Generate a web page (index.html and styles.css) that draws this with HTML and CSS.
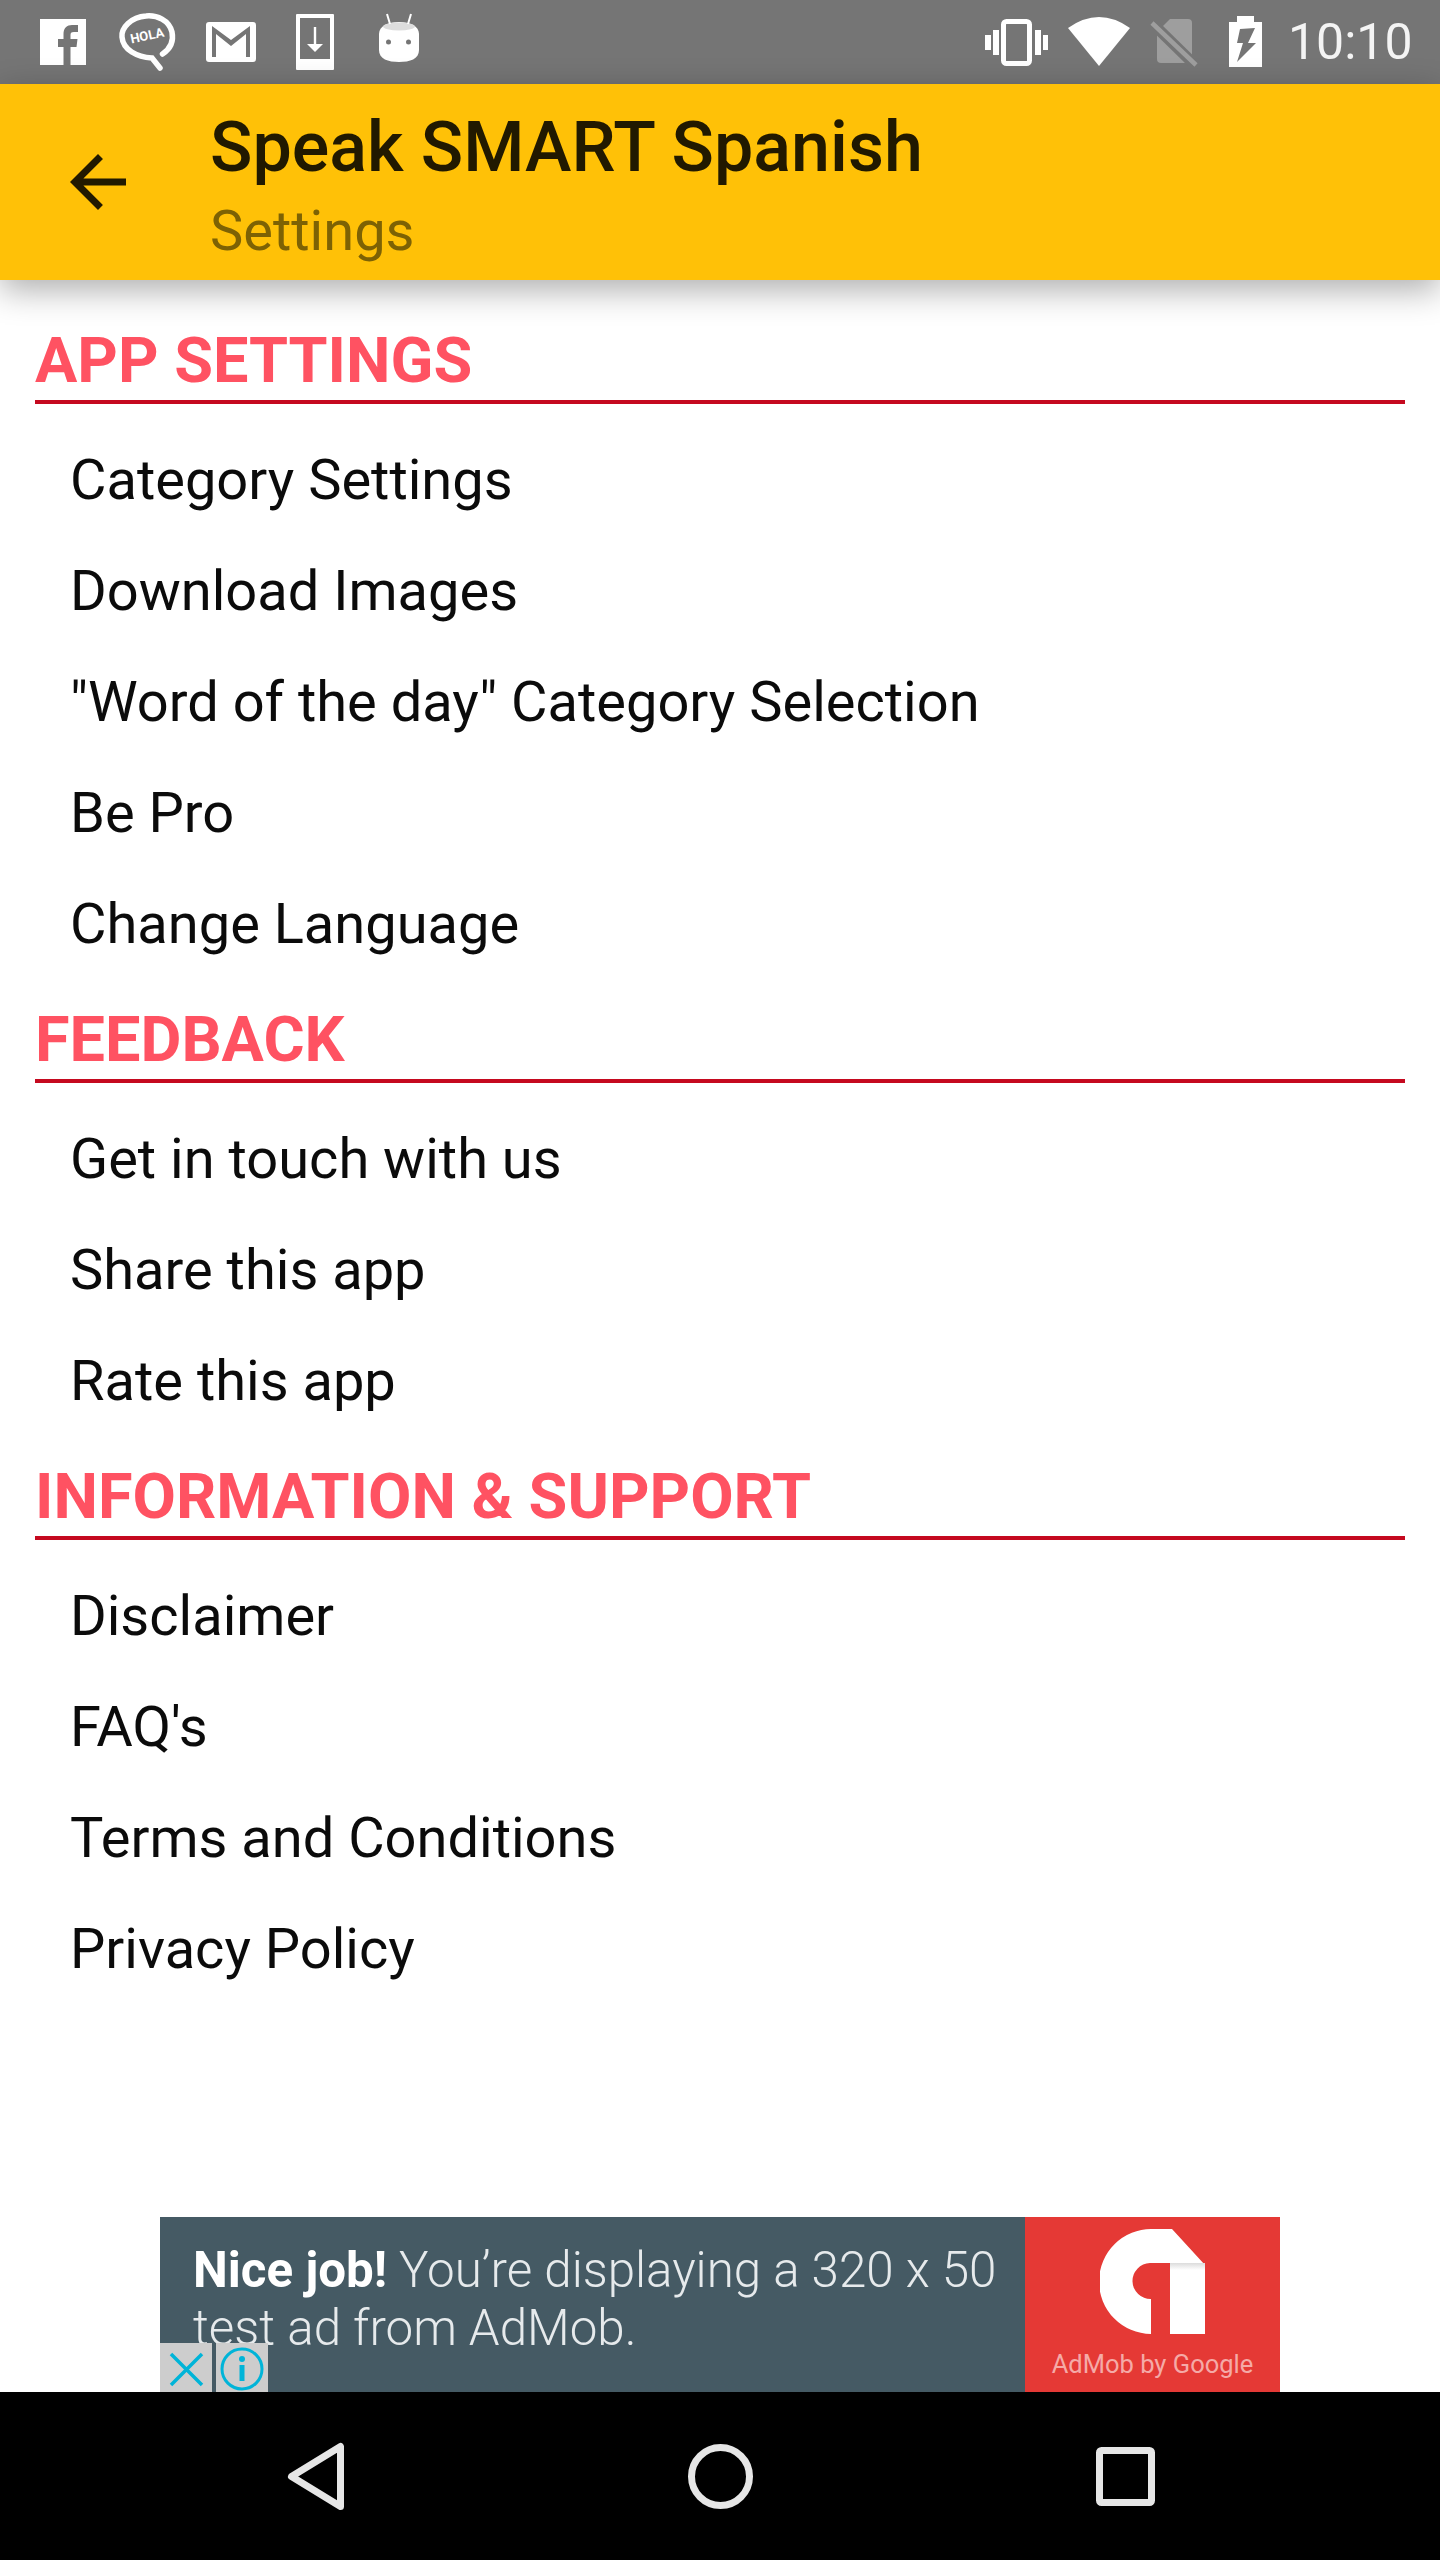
FILE: index.html
```html
<!DOCTYPE html>
<html lang="en">
<head>
<meta charset="utf-8">
<title>Speak SMART Spanish - Settings</title>
<link rel="stylesheet" href="styles.css">
</head>
<body>
<div class="screen">
  <header class="status">
    <svg class="status-left" viewBox="0 0 430 84" width="430" height="84" aria-hidden="true">
      <path fill="#fff" fill-rule="evenodd" d="M40 19H86V65H40ZM63.500 65V47H58V39H63.500V34C63.500 28 67 25 72 25H78V32H74C71 32 70.500 33 70.500 35V39H77.500L76.500 47H70.500V65Z"/>
      <g fill="none" stroke="#fff" stroke-linecap="round">
        <path stroke-width="5.500" d="M162.500 54C170 49 174 42 172 32C169 20 157 15 146 16C131 17 121 28 122 37C123 50 137 57 152 58L160 68"/>
      </g>
      <text class="hola" x="147" y="40" text-anchor="middle" transform="rotate(-12 147 35)">HOLA</text>
      <rect x="206" y="22" width="50" height="40" rx="3" fill="#fff"/>
      <path fill="#757575" d="M212 26L231 40L250 26V57H246V34L231 46L216 34V57H212Z"/>
      <rect x="296" y="14" width="38" height="56" rx="1" fill="#fff"/>
      <rect x="300" y="18" width="30" height="41" fill="#757575"/>
      <path fill="#fff" d="M313.800 27H316.200V44H323L315 52L307 44H313.800Z"/>
      <path fill="#fff" d="M379 34C379 26 388 22 399 22C410 22 419 26 419 34V50C419 59 410 62 399 62C388 62 379 59 379 50Z"/>
      <ellipse cx="399" cy="26.500" rx="16" ry="4" fill="#ddd"/>
      <path stroke="#fff" stroke-width="2" d="M387 14L390 24M411 14L408 24"/>
      <circle cx="388.500" cy="42" r="2.500" fill="#757575"/>
      <circle cx="408.500" cy="42" r="2.500" fill="#757575"/>
    </svg>
    <svg class="status-right" viewBox="985 0 285 84" width="285" height="84" aria-hidden="true">
      <rect x="1003.500" y="21.500" width="26" height="42" rx="3" fill="none" stroke="#fff" stroke-width="5"/>
      <path fill="#fff" d="M993 30H999V55H993ZM985 35H991V50H985ZM1035 30H1041V55H1035ZM1043 35H1048V50H1043Z"/>
      <path fill="#fff" d="M1068 28Q1099 6 1130 28L1099 66Z"/>
      <path fill="#9e9e9e" d="M1170 19H1188Q1192 19 1192 23V59Q1192 63 1188 63H1161Q1157 63 1157 59V32Z"/>
      <path stroke="#757575" stroke-width="11" d="M1150 21L1198 68"/>
      <path stroke="#9e9e9e" stroke-width="4.500" d="M1152 23L1196 65"/>
      <path fill="#fff" fill-rule="evenodd" d="M1237 16H1254V22H1262V67H1229V22H1237ZM1240 29L1255 28L1248 43H1256L1237 62L1243 43H1237Z"/>
    </svg>
    <span class="clock">10:10</span>
  </header>

  <div class="toolbar">
    <svg class="back" viewBox="0 0 24 24" width="84" height="84" aria-hidden="true"><path d="M20 11H7.830l5.590-5.590L12 4l-8 8 8 8 1.410-1.410L7.830 13H20v-2z"/></svg>
    <div class="titles">
      <div class="title">Speak SMART Spanish</div>
      <div class="subtitle">Settings</div>
    </div>
  </div>

  <main class="content">
    <section>
      <h2 class="heading">APP SETTINGS</h2>
      <ul class="list">
        <li>Category Settings</li>
        <li>Download Images</li>
        <li>"Word of the day" Category Selection</li>
        <li>Be Pro</li>
        <li>Change Language</li>
      </ul>
    </section>
    <section>
      <h2 class="heading">FEEDBACK</h2>
      <ul class="list">
        <li>Get in touch with us</li>
        <li>Share this app</li>
        <li>Rate this app</li>
      </ul>
    </section>
    <section>
      <h2 class="heading">INFORMATION &amp; SUPPORT</h2>
      <ul class="list">
        <li>Disclaimer</li>
        <li>FAQ's</li>
        <li>Terms and Conditions</li>
        <li>Privacy Policy</li>
      </ul>
    </section>

    <aside class="ad">
      <div class="ad-copy">
        <p><b>Nice job!</b> You’re displaying a 320 x 50</p>
        <p>test ad from AdMob.</p>
      </div>
      <div class="ad-brand">
        <svg viewBox="0 0 105 105" width="105" height="105" aria-hidden="true">
          <defs><linearGradient id="fold" x1="0" y1="0" x2="0" y2="1"><stop offset="0" stop-color="#dcdcdc"/><stop offset="1" stop-color="#fff"/></linearGradient></defs>
          <path fill="#fff" d="M52 0H72L105 36V105H70V34H50A18 18 0 0 0 51 70V105A52.500 52.500 0 0 1 52 0Z"/>
          <rect x="70" y="34" width="35" height="7" fill="url(#fold)"/>
        </svg>
        <span class="ad-brand-name">AdMob by Google</span>
      </div>
      <div class="ad-controls">
        <span class="ad-btn">
          <svg viewBox="0 0 52 49" width="52" height="49" aria-hidden="true"><path fill="none" stroke="#00b4d8" stroke-width="3.500" d="M11 11L42 42M42 11L11 42"/></svg>
        </span>
        <span class="ad-btn">
          <svg viewBox="0 0 52 49" width="52" height="49" aria-hidden="true"><circle cx="26" cy="26" r="20" fill="none" stroke="#00b4d8" stroke-width="3"/><circle cx="26" cy="16" r="3" fill="#00b4d8"/><rect x="23.500" y="22" width="5" height="16" fill="#00b4d8"/></svg>
        </span>
      </div>
    </aside>
  </main>

  <nav class="navbar">
    <svg viewBox="0 0 84 84" width="84" height="84" aria-hidden="true"><path class="nav-icon" d="M67.500 12.500V72.500L18.500 42.500Z"/></svg>
    <svg viewBox="0 0 84 84" width="84" height="84" aria-hidden="true"><circle class="nav-icon" cx="42.500" cy="42.500" r="29"/></svg>
    <svg viewBox="0 0 84 84" width="84" height="84" aria-hidden="true"><rect class="nav-icon" x="16.500" y="16.500" width="52" height="52" rx="2"/></svg>
  </nav>
</div>
</body>
</html>
```

FILE: styles.css
```css
* { box-sizing: border-box; }

html, body { margin: 0; padding: 0; }

body {
  background: #fff;
  font-family: Roboto, "Liberation Sans", sans-serif;
  color: #000;
}

.screen {
  width: 1440px;
  height: 2560px;
  display: flex;
  flex-direction: column;
  overflow: hidden;
}

/* status bar */
.status {
  height: 84px;
  flex: none;
  background: #757575;
  display: flex;
  align-items: center;
}

.status-left { flex: none; }

.status-right { flex: none; margin-left: 555px; }

.hola {
  font: 700 13px Roboto, sans-serif;
  fill: #fff;
}

.clock {
  margin-left: 18px;
  font-size: 50px;
  line-height: 84px;
  color: #f4f4f4;
}

/* toolbar */
.toolbar {
  height: 196px;
  flex: none;
  position: relative;
  z-index: 1;
  background: #ffc107;
  box-shadow: 0 10px 32px rgba(0, 0, 0, 0.32);
  display: flex;
  align-items: flex-start;
  padding-left: 56px;
}

.back {
  flex: none;
  margin-top: 56px;
  fill: #211900;
}

.titles { margin-left: 70px; }

.title {
  margin-top: 17px;
  font-size: 70px;
  font-weight: 500;
  line-height: 92px;
  color: #211900;
}

.subtitle {
  font-size: 56px;
  line-height: 76px;
  color: #7d6204;
}

/* content */
.content {
  flex: 1;
  min-height: 0;
  display: flex;
  flex-direction: column;
  padding-top: 21px;
}

.heading {
  margin: 0 35px;
  height: 103px;
  display: flex;
  align-items: flex-end;
  padding-bottom: 2px;
  border-bottom: 4px solid #c5091f;
  font-size: 63px;
  font-weight: 700;
  line-height: 74px;
  color: #ff5262;
}

.list {
  list-style: none;
  margin: 0;
  padding: 0;
}

.heading + .list { padding-top: 21px; }

.list li {
  height: 111px;
  padding-left: 70px;
  font-size: 56px;
  line-height: 111px;
  color: #0b0b0b;
}

/* ad */
.ad {
  position: relative;
  flex: none;
  height: 175px;
  margin: auto 160px 0;
  display: flex;
  overflow: hidden;
  background: #455a64;
}

.ad-copy {
  flex: 1;
  padding: 24px 0 0 33px;
  font-size: 49.3px;
  font-weight: 300;
  line-height: 58px;
  color: #e6eaec;
  white-space: nowrap;
}

.ad-copy p { margin: 0; }

.ad-copy b { font-weight: 700; color: #fff; }

.ad-brand {
  flex: none;
  width: 255px;
  background: #e53935;
  display: flex;
  flex-direction: column;
  align-items: center;
  padding-top: 12px;
}

.ad-brand-name {
  margin-top: 12px;
  font-size: 25.5px;
  line-height: 36px;
  color: #f5aaa7;
  white-space: nowrap;
}

.ad-controls {
  position: absolute;
  left: 0;
  bottom: 0;
  display: flex;
  gap: 4px;
}

.ad-btn {
  display: block;
  width: 52px;
  height: 49px;
  background: #cdcdcd;
}

.ad-btn svg { display: block; }

/* navigation */
.navbar {
  height: 168px;
  flex: none;
  background: #000;
  display: flex;
  align-items: center;
  justify-content: center;
  gap: 321px;
}

.nav-icon {
  fill: none;
  stroke: #e6e6e6;
  stroke-width: 7px;
  stroke-linejoin: round;
}
```
